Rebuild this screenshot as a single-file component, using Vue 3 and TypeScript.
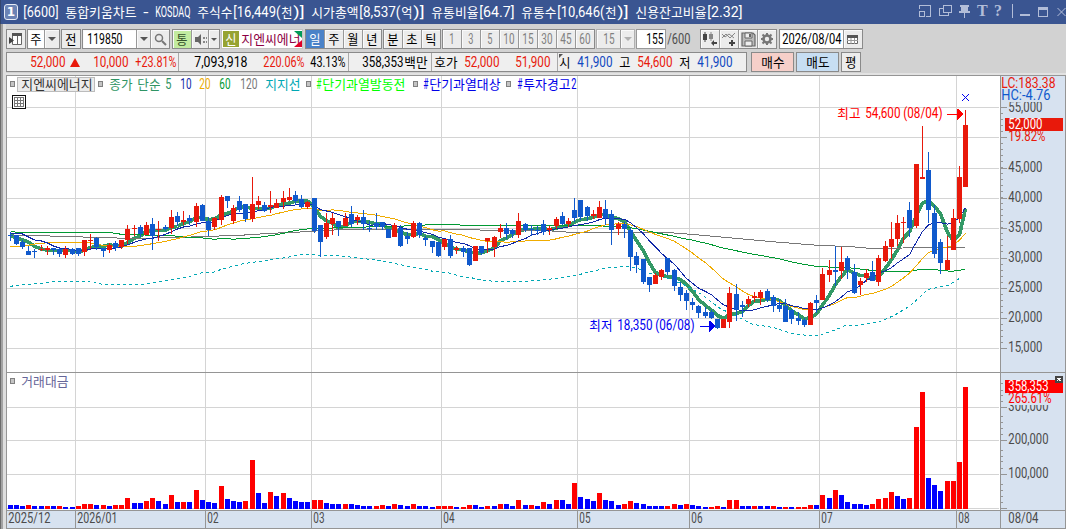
<script setup lang="ts">
import { h, type FunctionalComponent } from 'vue'

interface Run { s: string; x: number; w: number }

/** Splits a caption into Hangul and Latin runs laid on 12px / 6px cells. */
function toRuns(s: string, width?: number): Run[] {
  const parts = s.match(/[가-힣]+|[^가-힣]+/g) ?? []
  const isWide = (p: string) => /[가-힣]/.test(p)
  const wide = parts.filter(isWide).join('').length * 12
  const narrow = parts.filter((p) => !isWide(p)).join('').length
  const cell = width === undefined || narrow === 0 ? 6 : (width - wide) / narrow
  let x = 0
  return parts.map((p) => {
    const lead = p.length - p.trimStart().length
    const body = p.trim()
    const run = { s: body, x: x + lead * cell, w: body.length * (isWide(p) ? 12 : cell) }
    x += p.length * (isWide(p) ? 12 : cell)
    return run
  })
}

/** SVG text placed at x / y (baseline), squeezed into its cells. */
const Label: FunctionalComponent<{ t: string; x: number; y: number; w?: number }> = (p) =>
  h('g', toRuns(p.t, p.w).filter((r) => r.s).map((r) =>
    h('text', {
      x: p.x + r.x + 0.3, y: p.y, textLength: r.w - 0.8, lengthAdjust: 'spacingAndGlyphs',
      class: /[가-힣]/.test(r.s) ? 'ko' : 'la',
    }, r.s)))
Label.props = ['t', 'x', 'y', 'w']

/** Inline caption for the bars. */
const Cap: FunctionalComponent<{ t: string; w?: number }> = (p) => {
  const runs = toRuns(p.t, p.w)
  const last = runs[runs.length - 1]
  return h('svg', { class: 'cap', width: Math.round(last.x + last.w), height: 16 },
    [h(Label, { t: p.t, x: 0, y: 13, w: p.w })])
}
Cap.props = ['t', 'w']

// colour, high, body top, body bottom, low
const raw = `b232,235,236,241 b235,235,244,245 b240,242,247,249 b246,251,255,255 b249,251,252,258 r245,249,250,251 r246,248,250,255 b248,248,250,255 b248,249,254,257 r246,249,255,258
b248,249,254,255 b248,248,254,256 r240,240,252,256 r234,240,241,249 b237,238,247,250 b248,248,251,257 r243,245,250,253 b241,243,248,251 r240,240,247,249 r225,229,240,244
r225,228,229,236 b225,227,234,237 r222,225,235,235 b218,224,236,250 r221,229,230,241 b225,227,229,231 r210,217,228,234 b212,216,222,226 r211,220,222,225 b215,218,221,225
r203,206,222,227 b204,205,221,221 b217,221,230,236 r217,218,227,230 r195,197,220,225 b196,196,201,208 r205,208,221,224 b196,201,210,212 b204,204,219,222 r177,204,219,222
r196,201,205,209 b202,205,211,212 r191,205,207,213 r199,203,208,208 r191,198,202,209 r188,197,200,201 b191,195,201,205 b195,199,207,208 r201,202,207,209 b198,198,231,233
b225,225,242,257 r213,223,237,239 r213,218,224,235 b221,221,227,236 r213,218,226,226 b206,214,224,227 r215,217,220,225 b210,217,224,230 b221,228,229,232 b213,223,227,230
b222,222,227,230 b229,229,238,238 r223,225,237,237 b225,228,246,247 b232,236,239,244 r221,223,237,238 b222,223,235,238 b236,238,240,246 b241,241,247,253 b242,242,256,257
r239,239,247,250 b235,239,256,258 r246,248,250,254 b246,248,252,257 b248,248,265,266 r246,246,261,261 b246,246,253,255 r238,238,241,253 r236,237,247,257 r224,228,232,238
b223,228,234,239 b229,230,234,238 r213,221,235,238 b223,224,230,232 b225,229,230,236 b226,230,231,235 b220,224,232,235 r226,228,230,235 r217,219,226,229 b212,216,224,225
r218,221,224,227 b198,210,218,222 b200,200,217,220 b206,207,216,221 r210,214,216,219 r201,207,218,218 b200,209,218,225 b210,214,230,245 r222,224,229,235 b222,224,229,238
b228,230,257,271 b252,256,265,273 b259,259,282,284 b277,277,285,292 r273,275,284,284 r269,270,277,280 b258,258,272,275 b269,270,286,291 b282,287,295,301 b290,293,301,310
b298,302,305,310 b305,306,313,318 b307,312,316,318 b310,312,318,319 b319,319,328,329 r319,319,328,328 r287,293,322,328 b284,294,310,321 b301,305,307,317 r296,299,304,307
r292,296,298,302 r290,292,298,305 b289,291,300,302 b295,297,306,312 b299,305,309,312 b299,306,322,322 b309,310,319,324 b312,318,321,325 b318,320,325,327 r302,303,325,325
b295,300,303,313 r268,274,300,300 r260,270,275,282 b246,270,272,286 r247,262,271,279 b256,258,270,279 b264,272,293,294 r278,281,285,295 r269,273,278,282 b261,272,281,281
r255,258,282,286 r241,246,261,262 r222,239,247,259 r215,223,239,246 r217,222,223,243 b202,210,228,237 r164,164,226,228 r126,177,179,179 b152,170,210,223 b205,213,254,258
b239,242,263,274 r236,260,270,270 r209,218,250,250 r166,177,219,223 r110,125,187,187`

const volRaw = `b4 b4 b3 r4 b3 b3 r3 b3 r3 b2 b2 r3 r5 r5 b4 r4 b3 r4 r4 r11 b6 b6 r8 r11 b8 b5 r14 b7 r7 b7 r19 b9 b7 b6 r23 b10 b8 b7 r8 r49
b16 b6 r17 b13 r16 b11 b8 b7 b7 r9 r9 b6 b5 b5 r5 b5 b4 b3 b3 r3 r4 b3 r5 b4 b3 r5 b3 b3 b2 r3 r3 r3 b2 r2 r4 b4 b2 r3 b3 r5
b5 b3 r9 b4 r4 b3 r7 b5 r9 b9 b5 r26 b12 b10 b8 r16 b9 b8 b4 r5 r8 b6 b5 b3 b3 b3 r3 r5 b4 r5 b4 b3 b2 r2 r3 b2 r9 r9 b3 b3
r3 b3 b3 r3 b2 r2 b2 r2 r2 r4 b4 r14 b11 r19 b14 b7 b5 b5 b4 r5 r10 r11 r17 b13 b10 r11 r82 r117 b31 b24 b18 r28 r28 r47 r122`

const STEP = 211 / 34
const barX = (i: number) => Math.floor(8 + i * STEP + 0.001)

const candles = raw.split(/\s+/).map((c, i) => {
  const [hi, top, bot, lo] = c.slice(1).split(',').map(Number)
  return { x: barX(i), up: c[0] === 'r', hi, top, bot, lo }
})
const volumes = volRaw.split(/\s+/).map((v, i) => ({ x: barX(i), up: v[0] === 'r', n: Number(v.slice(1)) }))
const closes = candles.map((c) => (c.up ? c.top + 0.5 : c.bot - 0.5))

/** Moving average; `lead` holds the values before the first full window. */
function average(n: number, lead: number[]): string {
  return closes.map((_, i) => {
    const v = i < lead.length ? lead[i] : closes.slice(i - n + 1, i + 1).reduce((a, b) => a + b, 0) / n
    return `${barX(i) + 2.5},${v.toFixed(1)}`
  }).join(' ')
}

/** Samples sparse [x, y] anchors at the first `count` bars. */
function sample(pts: number[][], count: number): number[] {
  return Array.from({ length: count }, (_, i) => {
    const x = barX(i) + 2.5
    const k = Math.max(1, pts.findIndex((p) => p[0] >= x))
    const [a, b] = [pts[k - 1], pts[k]]
    return a[1] + ((b[1] - a[1]) * (x - a[0])) / (b[0] - a[0])
  })
}

const ma5 = average(5, [235, 238, 240, 242])
const ma10 = average(10, [233, 233.5, 234, 237, 240, 241, 243, 246, 248])
const ma20 = average(20, sample([[10, 247], [24, 246], [35, 244], [50, 242.5], [88, 242.5], [100, 245], [117, 246.5], [135, 246.5]], 19))
const ma60 = average(60, sample([[10, 231.5], [20, 232.5], [111, 232.5], [120, 234.3], [140, 234.5], [150, 235.5], [173, 235.5], [177, 236.5], [205, 238.2],
  [213, 239.3], [223, 238.5], [235, 239.3], [243, 238.5], [260, 237.2], [272, 235.5], [283, 233.5], [292, 231], [308, 228.8], [347, 227.5], [373, 226.8], [400, 226]], 59))
const ma120 = '10,235.5 50,236 93,237.3 117,238 133,238.5 173,237.5 210,236.5 223,235.8 250,234.8 267,233.5 297,232.2 313,231.2 343,229.5 478,229.5 480,230 552,230 553,231.5 578,232.5 670,232.7 693,234.5 727,237.5 770,241.5 820,245.5 850,246.5 870,248.4 945,247.5 965,247.5'
const support = '10,286.4 23,284.4 43,283.4 53,281.4 87,281.4 103,284.4 143,284.4 167,280.4 190,276.4 203,272.4 213,272.4 223,268.7 243,263.7 267,260.4 287,257.4 303,254.4 315,254.6 319,256 333,255.5 345,256.4 360,258.4 372,259.4 387,261.7 400,264.6 413,267.4 423,268.7 433,271.4 447,272.4 458,275.7 475,278.4 482,280.4 497,281.4 522,281.4 543,280 563,277.6 580,274.4 593,271 610,267.4 630,266.4 638,268.7 650,273.4 668,278.4 682,283.7 700,293.4 720,308.4 740,318 753,324.4 773,327.4 790,333 807,335.5 820,335 835,330 845,325.7 860,325 880,321.4 893,316 910,306 928,289.4 948,285.4 962,277'

const grids = [75, 205, 311, 441, 577, 689, 819, 956]
const dates = ['2026/01', '02', '03', '04', '05', '06', '07', '08']
const priceRows = [107, 137, 168, 198, 228, 258, 288, 318, 348]
const priceLabels = [[45, 168], [40, 198], [35, 228], [30, 258], [25, 288], [20, 318], [15, 348]]
const volRows = [407, 440, 474, 508]
const minor = Array.from({ length: 40 }, (_, i) => 107 + Math.round(i * 6.02)).filter((y) => y < 360)
const volMinor = [383, 390, 395, 401, 416, 422, 428, 434, 450, 456, 461, 468, 484, 490, 496, 502]
const minutes = ['1', '3', '5', '10', '15', '30', '45', '60']
const markers = [98, 306, 413, 506]
</script>

<template>
  <div class="app">
    <header class="title">
      <span class="badge">1</span>
      <div class="words">
        <Cap t="[6600]" /><Cap t="통합키움차트" /><Cap t="-" /><Cap t="KOSDAQ" />
        <Cap t="주식수[16,449(천)]" /><Cap t="시가총액[8,537(억)]" /><Cap t="유통비율[64.7]" />
        <Cap t="유통수[10,646(천)]" /><Cap t="신용잔고비율[2.32]" />
      </div>
      <svg class="winicons" width="147" height="24" viewBox="919 0 147 24">
        <g fill="none" stroke="#b2bdd8" stroke-width="1" shape-rendering="crispEdges">
          <path d="M919.500 9V5.500h11v11h-5M919.500 11.500h5v5h-5z" />
          <path d="M943.500 5.500h8v7h-8zM943 8.500h-3.500v7h9v-2.500" />
          <path d="M1012.500 4v14M1038.500 7.500h9v9h-9z" />
        </g>
        <path fill="#b2bdd8" d="M960 5h9v2h-1v4h2v2h-5v5h-1v-5h-5v-2h2V7h-1zM1020 14h10v2h-10zM1038 7h10v3h-10z" />
        <path d="M1057.500 8l8 8m0-8l-8 8" stroke="#b2bdd8" fill="none" />
        <text x="977" y="16" class="glyph">T</text>
        <text x="994" y="16" class="glyph">?</text>
      </svg>
    </header>

    <div class="tools">
      <button class="btn w20"><svg width="14" height="14"><path d="M3.500 1.500h9v11h-9zM3 3h10M8.500 3v10" fill="#fff" stroke="#666" /><path d="M0 5l5 3.500L0 12z" fill="#444" /><path d="M3 1h10v3H3z" fill="#555" /></svg></button>
      <div class="group m1"><span class="cell white w17"><Cap t="주" /></span><span class="cell w15"><i class="tri" /></span></div>
      <button class="btn w20 m1"><Cap t="전" /></button>
      <div class="group m1"><span class="cell white code"><Cap t="119850" /></span><span class="cell w15"><i class="tri" /></span><span class="cell w19"><svg width="13" height="13"><circle cx="5" cy="5" r="3.500" fill="none" stroke="#777" stroke-width="1.500" /><path d="M8 8l4 4" stroke="#777" stroke-width="2" /></svg></span></div>
      <div class="group m2"><span class="cell green w19"><Cap t="통" /></span><span class="cell w17"><svg width="13" height="13"><path d="M1 4h3l3-3v11L4 9H1z" fill="#666" /><path d="M9 4h2v2H9zM12 4h1v2h-1zM9 8h2v2H9zM12 8h1v2h-1z" fill="#888" /></svg></span><span class="cell w11"><i class="tri small" /></span></div>
      <div class="stock"><span class="new"><Cap t="신" /></span><span class="name"><Cap t="지엔씨에너" /></span><i class="corner g" /><i class="corner r" /></div>
      <div class="group m2"><span class="cell on w19"><Cap t="일" /></span><span class="cell w19"><Cap t="주" /></span><span class="cell w19"><Cap t="월" /></span><span class="cell w19"><Cap t="년" /></span></div>
      <div class="group m1"><span class="cell w19"><Cap t="분" /></span><span class="cell w19"><Cap t="초" /></span><span class="cell w19"><Cap t="틱" /></span></div>
      <div class="group m1 dim"><span v-for="m in minutes" :key="m" class="cell w19"><Cap :t="m" /></span></div>
      <div class="group m1 dim lite"><span class="cell w24"><Cap t="15" /></span><span class="cell w14"><i class="tri pale" /></span></div>
      <div class="count"><Cap t="155" /></div>
      <span class="total"><Cap t="/600" /></span>
      <div class="group icons">
        <span class="cell w19"><svg width="16" height="16"><path d="M1 3h4v6H1zM2.500 1h1v10h-1z" fill="#444" /><path d="M7 3h4v5H7zM8.500 1h1v9h-1z" fill="#888" /><path d="M9 12l3-3v2h3v2h-3v2z" fill="#444" /></svg></span>
        <span class="cell w19"><svg width="16" height="16"><path d="M1 7l4-4 4 4 5-5M1 3l3 3 4-3 5 4" fill="none" stroke="#888" /><path d="M8 12h6M11 9v6" stroke="#444" stroke-width="2" /></svg></span>
        <span class="cell w19"><svg width="15" height="15"><path d="M1 1h11l2 2v11H1z" fill="#bbb" stroke="#666" stroke-width="1.200" /><path d="M4 1h7v5H4zM4 9h7v5H4z" fill="#eee" stroke="#666" /><path d="M8 2h2v3H8z" fill="#666" /></svg></span>
        <span class="cell w20"><svg width="14" height="14"><circle cx="7" cy="7" r="3.500" fill="none" stroke="#777" stroke-width="2.600" /><path d="M7 1v2M7 11v2M1 7h2M11 7h2M2.500 2.500l1.500 1.500M10 10l1.500 1.500M11.500 2.500L10 4M4 10l-1.500 1.500" stroke="#777" stroke-width="2" /></svg></span>
      </div>
      <div class="group date"><span class="cell white w65"><Cap t="2026/08/04" /></span><span class="cell w19"><svg width="12" height="11"><path d="M.5 1.500h10v8H.5z" fill="#fff" stroke="#666" /><path d="M0 1h11v3H0z" fill="#555" /><path d="M4 4v6M7.500 4v6M0 6.500h11" stroke="#999" /></svg></span></div>
    </div>

    <div class="tools quote">
      <div class="group panel">
        <span class="seg s1 red"><Cap t="52,000" /><i class="up" /><Cap t="10,000" /><Cap t="+23.81%" class="g6" /></span>
        <span class="seg s2"><Cap t="7,093,918" /><Cap t="220.06%" class="red g15" /><Cap t="43.13%" class="g5" /></span>
        <span class="seg s3"><Cap t="358,353백만" /></span>
        <span class="seg s4"><Cap t="호가" /><Cap t="52,000" class="red g6" /><Cap t="51,900" class="red g15" /></span>
        <span class="seg s5"><i class="fold" /><Cap t="시" /><Cap t="41,900" class="blue" /><Cap t="고" /><Cap t="54,600" class="red" /><Cap t="저" /><Cap t="41,900" class="blue" /></span>
      </div>
      <button class="btn buy"><Cap t="매수" /></button>
      <button class="btn sell"><Cap t="매도" /></button>
      <button class="btn w20 avg"><Cap t="평" /></button>
    </div>

    <div class="frame">
      <svg class="chart" width="1066" height="456" viewBox="0 73 1066 456" shape-rendering="crispEdges">
        <rect x="6" y="73" width="1060" height="2" fill="#e2e2e2" />
        <rect x="7" y="76" width="993" height="434" fill="#fff" />
        <rect x="1001" y="76" width="64" height="452" fill="#d7e2f0" />
        <rect x="7" y="511" width="1058" height="17" fill="#d7e2f0" />
        <g fill="#d4d4d4">
          <rect v-for="x in grids" :key="x" :x="x" y="76" width="1" height="434" />
          <rect v-for="y in priceRows" :key="y" x="7" :y="y" width="992" height="1" />
          <rect v-for="y in volRows" :key="y" x="7" :y="y" width="992" height="1" />
        </g>
        <g fill="#959595">
          <rect x="6" y="75" width="1060" height="1" /><rect x="6" y="75" width="1" height="454" />
          <rect x="1000" y="75" width="1" height="454" /><rect x="1065" y="75" width="1" height="454" />
          <rect x="6" y="372" width="1060" height="1" /><rect x="6" y="510" width="1060" height="1" />
          <rect x="6" y="528" width="1060" height="1" />
          <rect v-for="x in grids" :key="x" :x="x" y="511" width="1" height="17" />
          <rect v-for="y in minor" :key="y" x="1001" :y="y" width="2" height="1" />
          <rect v-for="y in volMinor" :key="y" x="1001" :y="y" width="2" height="1" />
          <rect v-for="y in priceRows" :key="y" x="1001" :y="y" width="6" height="1" />
          <rect v-for="y in volRows" :key="y" x="1001" :y="y" width="6" height="1" />
        </g>

        <g fill="none" stroke-width="1">
          <polyline :points="ma5" stroke="#339966" stroke-width="3.600" />
          <polyline :points="support" stroke="#00a8b4" stroke-dasharray="3 3" />
          <polyline :points="ma120" stroke="#777" />
          <polyline :points="ma60" stroke="#009933" />
          <polyline :points="ma20" stroke="#f0ac00" />
          <polyline :points="ma10" stroke="#1028a8" />
        </g>
        <g v-for="(c, i) in candles" :key="i" :fill="c.up ? '#e8190b' : '#1059cc'">
          <rect :x="c.x + 2" :y="c.hi" width="1" :height="c.lo - c.hi" />
          <rect :x="c.x" :y="c.top" width="5" :height="c.bot - c.top" />
        </g>
        <rect v-for="(v, i) in volumes" :key="'v' + i" :x="v.x" :y="509 - v.n" width="5" :height="v.n" :fill="v.up ? '#f00' : '#00f'" />

        <!-- legend -->
        <g fill="#c4c4c4" stroke="#808080">
          <rect x="10.500" y="81.500" width="4" height="5" /><rect x="10.500" y="378.500" width="4" height="5" />
          <rect v-for="x in markers" :key="x" :x="x + 0.5" y="81.500" width="4" height="5" />
        </g>
        <rect x="17.500" y="77.500" width="77" height="14" fill="#ebebeb" stroke="#bcbcbc" />
        <Label t="지엔씨에너지" :x="21" :y="89" fill="#333" />
        <Label t="종가" :x="109" :y="89" fill="#2f9464" />
        <Label t="단순" :x="137" :y="89" fill="#2f9464" />
        <Label t="5" :x="165" :y="89" :w="7" fill="#2f9464" />
        <Label t="10" :x="180" :y="89" fill="#1028a8" />
        <Label t="20" :x="199" :y="89" fill="#f0ac00" />
        <Label t="60" :x="219" :y="89" fill="#009933" />
        <Label t="120" :x="240" :y="89" fill="#777" />
        <Label t="지지선" :x="265" :y="89" fill="#00a8b4" />
        <Label t="#단기과열발동전" :x="316" :y="89" fill="#00ff00" />
        <Label t="#단기과열대상" :x="423" :y="89" fill="#0000e8" />
        <Label t="#투자경고2" :x="517" :y="89" fill="#0000e8" />
        <Label t="거래대금" :x="21" :y="386" fill="#666699" />
        <path d="M12.500 95.500h13v13h-13z" fill="#fff" stroke="#111" />
        <path d="M14.500 97.500h9v9h-9zM14 100.500h10M14 103.500h10M17.500 98v9M20.500 98v9" fill="none" stroke="#777" />

        <!-- callouts -->
        <g fill="#f00">
          <Label t="최고" :x="837" :y="118" />
          <Label t="54,600" :x="865" :y="118" :w="36" />
          <Label t="(08/04)" :x="903" :y="118" :w="40" />
          <path d="M947 114h10v-5h1l5 5-5 6h-1v-5h-10z" />
        </g>
        <g fill="#0000f0">
          <Label t="최저" :x="589" :y="330" />
          <Label t="18,350" :x="617" :y="330" :w="36" />
          <Label t="(06/08)" :x="655" :y="330" :w="40" />
          <path d="M700 326h9v-5h1l5 5-5 6h-1v-5h-9z" />
        </g>
        <path d="M962 94l7 7m0-7l-7 7" stroke="#0000f0" fill="none" shape-rendering="auto" />

        <!-- price axis -->
        <g fill="#4b4b4b">
          <Label t="55,000" :x="1008" :y="112" :w="35" />
          <Label v-for="p in priceLabels" :key="p[0]" :t="p[0] + ',000'" :x="1008" :y="p[1] + 4" :w="35" />
          <Label t="300,000" :x="1008" :y="411" :w="41" />
          <Label t="200,000" :x="1008" :y="444" :w="41" />
          <Label t="100,000" :x="1008" :y="478" :w="41" />
        </g>
        <rect x="1001" y="76" width="64" height="26" fill="#d7e2f0" />
        <Label t="LC:183.38" :x="1001" :y="88" :w="55" fill="#e8190b" />
        <Label t="HC:-4.76" :x="1001" :y="100" :w="50" fill="#1059cc" />
        <rect x="1005" y="118" width="58" height="13" fill="#e8190b" />
        <Label t="52,000" :x="1008" :y="129" :w="35" fill="#fff" />
        <Label t="19.82%" :x="1008" :y="141" :w="38" fill="#e8190b" />
        <rect x="1007" y="393" width="56" height="12" fill="#d7e2f0" />
        <rect x="1005" y="380" width="58" height="13" fill="#f00" />
        <Label t="358,353" :x="1008" :y="391" :w="41" fill="#fff" />
        <Label t="265.61%" :x="1008" :y="403" :w="44" fill="#f00" />
        <rect x="1055" y="376" width="8" height="7" fill="#444" />
        <path d="M1057 378l4 3m0-3l-4 3" stroke="#fff" fill="none" />

        <!-- date axis -->
        <g fill="#4b4b4b">
          <Label t="2025/12" :x="8" :y="523" :w="43" />
          <Label v-for="(d, i) in dates" :key="d" :t="d" :x="grids[i] + 2" :y="523" :w="d.length > 2 ? 41 : 12" />
          <Label t="08/04" :x="1008" :y="523" :w="31" />
        </g>
      </svg>
    </div>
  </div>
</template>

<style>
html, body { margin: 0; overflow: hidden; }
.cap { display: block; flex: none; fill: currentColor; overflow: visible; }
.ko { font: 13px "Noto Sans CJK KR", sans-serif; }
.la { font: 14px Roboto, "Liberation Sans", sans-serif; }
</style>

<style scoped>
.app { width: 1066px; height: 529px; background: #d2d2d2; box-shadow: inset 1px 0 #6c6c6c, inset 3px 0 #a2a2a2, inset 6px 0 #dedede; display: flex; flex-direction: column; color: #000; }
.title { height: 24px; flex: none; background: #3a5591; color: #fff; display: flex; align-items: center; box-sizing: border-box; padding-left: 4px; box-shadow: inset 1px 0 #33466f; }
.badge { width: 14px; height: 16px; box-sizing: border-box; border: 1px solid #e6ebf5; border-radius: 3px; font: bold 12px/14px "DejaVu Sans", sans-serif; text-align: center; background: #6b83b5; }
.words { display: flex; gap: 6px; margin: -1px 0 0 5px; flex: 1; }
.winicons { flex: none; }
.glyph { font: bold 16px "Liberation Serif", serif; fill: #b2bdd8; }
.tools { display: flex; height: 20px; margin: 5px 0 0 6px; flex: none; }
.quote { margin-top: 3px; }
.btn, .group { box-sizing: border-box; border: 1px solid #8a8a8a; background: #ececec; display: flex; align-items: center; justify-content: center; padding: 0; height: 20px; flex: none; color: #000; }
.group { justify-content: flex-start; }
.cell { height: 18px; display: flex; align-items: center; justify-content: center; box-sizing: border-box; border-right: 1px solid #999; background: #ececec; flex: none; box-shadow: inset 1px 1px #fafafa; }
.cell:last-child { border-right: 0; }
.white { background: #fff; }
.w11 { width: 10px; } .w14 { width: 13px; } .w15 { width: 14px; } .w17 { width: 17px; } .w19 { width: 19px; } .w20 { width: 20px; } .w24 { width: 24px; }
.w65 { width: 64px; }
.m1 { margin-left: 1px; } .m2 { margin-left: 2px; }
.code { width: 54px; justify-content: flex-start; padding-left: 4px; }
.code + .w15 + .w19 { width: 18px; }
.green { background: #c2eba0; color: #35522b; }
.on { background: #4a82c8; color: #fff; box-shadow: none; }
.dim.group { color: #808080; }
.lite { border-color: #b0b0b0; }
.tri { border: 4px solid transparent; border-top: 4px solid #555; border-bottom: 0; }
.tri.small { border-width: 3px 3px 0; }
.tri.pale { border-top-color: #b0b0b0; }
.stock { position: relative; width: 82px; height: 20px; margin-left: 1px; box-sizing: border-box; border: 1px solid #c4c4c4; background: #fff; display: flex; align-items: center; flex: none; padding-left: 1px; }
.new { width: 16px; height: 16px; background: #96a332; color: #fff; display: flex; align-items: center; justify-content: center; }
.name { color: #8c0045; margin-left: 2px; }
.corner { position: absolute; right: 0; width: 8px; height: 7px; }
.corner.g { top: 1px; background: #009a58; clip-path: polygon(0 0, 100% 0, 100% 100%); }
.corner.r { bottom: 1px; background: #e00028; clip-path: polygon(100% 0, 100% 100%, 0 100%); }
.stock + .m2 > .cell:last-child { width: 18px; }
.m1 .cell.w19:last-child { width: 18px; }
.count { width: 30px; height: 20px; box-sizing: border-box; border: 1px solid #999; background: #fff; margin-left: 1px; display: flex; align-items: center; justify-content: flex-end; padding-right: 1px; flex: none; }
.total { color: #4d4d4d; margin: 2px 0 0 1px; flex: none; }
.icons { margin-left: 9px; }
.icons .w20 { width: 18px; }
.icons + .date { margin-left: 2px; }
.date .w19 { width: 18px; }
.panel { width: 741px; background: #efefef; }
.seg { display: flex; align-items: center; height: 18px; box-sizing: border-box; border-right: 1px solid #a9a9a9; flex: none; }
.seg:last-child { border-right: 0; }
.s1 { width: 172px; padding-left: 23px; }
.s2 { width: 170px; padding-left: 15px; }
.s3 { width: 83px; padding-left: 13px; }
.s4 { width: 126px; padding-left: 2px; }
.s5 { padding-left: 1px; gap: 6px; position: relative; }
.fold { position: absolute; left: 1px; top: 1px; border: 2px solid #555; border-right-color: transparent; border-bottom-color: transparent; }
.up { border: 5px solid transparent; border-bottom: 9px solid #e8190b; border-top: 0; margin: 0 13px 0 4px; }
.g5 { margin-left: 5px; } .g6 { margin-left: 6px; } .g15 { margin-left: 15px; }
.red { color: #e8190b; } .blue { color: #1048c0; }
.buy { width: 43px; background: #f6cfc9; margin-left: 4px; }
.sell { width: 43px; background: #c7def3; margin-left: 2px; }
.avg { margin-left: 2px; }
.frame { margin-top: 1px; flex: none; height: 456px; }
.chart { display: block; }
</style>
